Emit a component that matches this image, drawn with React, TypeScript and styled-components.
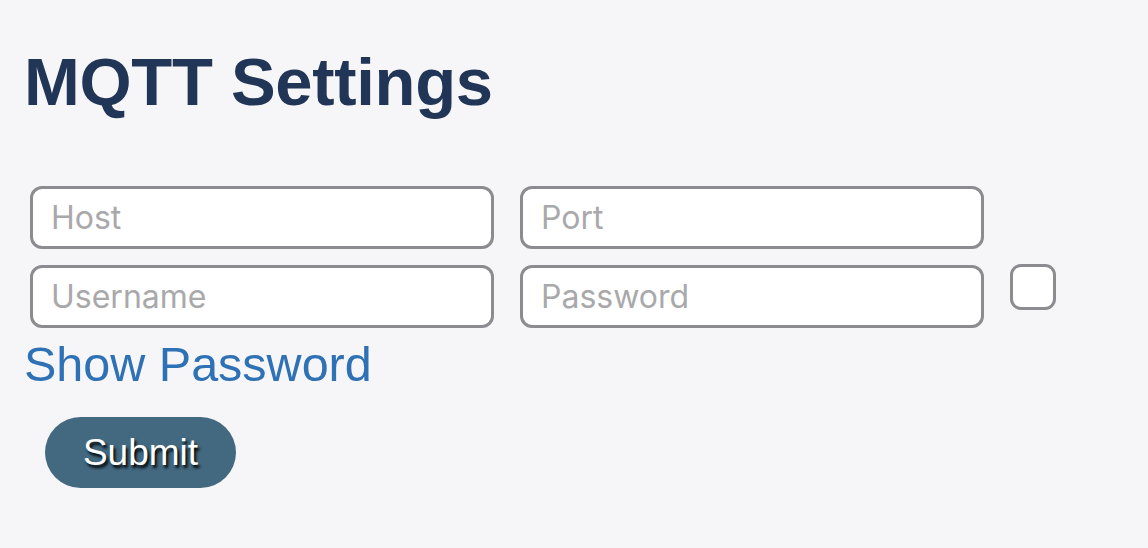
import styled, { createGlobalStyle } from "styled-components";

//global
const GlobalStyle = createGlobalStyle`
  html, body {
    margin: 0;
    padding: 0;
    background: #f6f6f9;
  }
  body {
    font-family: "Liberation Sans", Arial, sans-serif;
  }
`;

//styles
const Page = styled.main`
  min-height: 548px;
  box-sizing: border-box;
  padding: 48px 24px 0 24px;
  background: #f6f6f9;
`;
const Title = styled.h1`
  margin: 0;
  font-size: 67px;
  line-height: 67px;
  font-weight: 700;
  letter-spacing: -0.3px;
  color: #213657;
`;
const Form = styled.form`
  display: flex;
  flex-direction: column;
  align-items: flex-start;
  margin-top: 71px;
`;
const Fields = styled.div`
  display: grid;
  grid-template-columns: 464px 464px 46px;
  column-gap: 26px;
  row-gap: 16px;
  margin-left: 6px;
`;
const Field = styled.input`
  box-sizing: border-box;
  width: 100%;
  height: 63px;
  padding: 0 18px;
  border: 3px solid #8b8b90;
  border-radius: 12px;
  background: #ffffff;
  font-family: "Inter", "Liberation Sans", sans-serif;
  font-size: 32px;
  color: #222;
  outline: none;
  &::placeholder {
    color: #a9a9ab;
  }
`;
const Check = styled.input`
  appearance: none;
  box-sizing: border-box;
  width: 46px;
  height: 46px;
  margin: -1px 0 0 0;
  border: 3px solid #8b8b90;
  border-radius: 11px;
  background: #ffffff;
  align-self: start;
`;
const ShowLabel = styled.label`
  margin-top: 12px;
  font-size: 48.5px;
  line-height: 48px;
  color: #2e71b5;
`;
const SubmitButton = styled.button`
  margin: 29px 0 0 21px;
  width: 191px;
  height: 71px;
  border: none;
  border-radius: 36px;
  background: #436980;
  color: #ffffff;
  font-family: "Liberation Sans", Arial, sans-serif;
  font-size: 37px;
  text-shadow: 2px 3px 3px #000000;
  cursor: pointer;
`;

const fields = [
  { name: "host", placeholder: "Host", type: "text" },
  { name: "port", placeholder: "Port", type: "text" },
];

export default function App() {
  return (
    <>
      <GlobalStyle />
      <Page>
        <Title>MQTT Settings</Title>
        <Form onSubmit={(e) => e.preventDefault()}>
          <Fields>
            {fields.map((f) => (
              <Field key={f.name} name={f.name} type={f.type} placeholder={f.placeholder} />
            ))}
            <span />
            <Field name="username" type="text" placeholder="Username" />
            <Field name="password" type="password" placeholder="Password" />
            <Check type="checkbox" id="showPassword" />
          </Fields>
          <ShowLabel htmlFor="showPassword">Show Password</ShowLabel>
          <SubmitButton type="submit">Submit</SubmitButton>
        </Form>
      </Page>
    </>
  );
}
